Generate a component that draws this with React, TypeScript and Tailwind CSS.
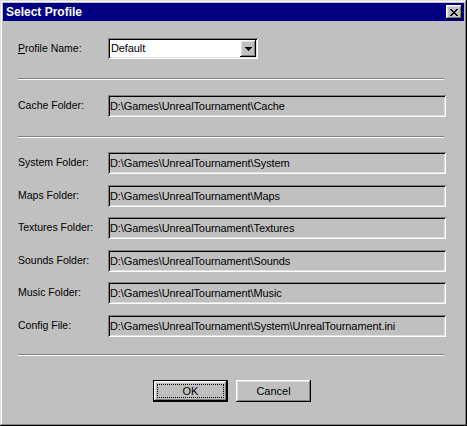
const raised =
  'shadow-[inset_-1px_-1px_#000,inset_1px_1px_#fff,inset_-2px_-2px_#808080,inset_2px_2px_#dfdfdf]';
const sunken =
  'shadow-[inset_1px_1px_#808080,inset_-1px_-1px_#fff,inset_2px_2px_#000,inset_-2px_-2px_#dfdfdf]';

const folders = [
  { label: 'System Folder:', path: 'D:\\Games\\UnrealTournament\\System', mt: 'mt-0' },
  { label: 'Maps Folder:', path: 'D:\\Games\\UnrealTournament\\Maps', mt: 'mt-[11px]' },
  { label: 'Textures Folder:', path: 'D:\\Games\\UnrealTournament\\Textures', mt: 'mt-[10px]' },
  { label: 'Sounds Folder:', path: 'D:\\Games\\UnrealTournament\\Sounds', mt: 'mt-[11px]' },
  { label: 'Music Folder:', path: 'D:\\Games\\UnrealTournament\\Music', mt: 'mt-[10px]' },
  { label: 'Config File:', path: 'D:\\Games\\UnrealTournament\\System\\UnrealTournament.ini', mt: 'mt-[11px]' },
];

function Separator({ className }: { className: string }) {
  return <div className={`w-[426px] h-[2px] border-t border-[#808080] border-b border-b-white ${className}`} />;
}

function FieldRow({ label, path, className = '' }: { label: string; path: string; className?: string }) {
  return (
    <div className={`flex items-center h-[22px] ${className}`}>
      <div className="w-[90px] text-[10.5px] text-black">{label}</div>
      <div className={`w-[338px] h-[22px] ${sunken} bg-[#c0c0c0] flex items-center pl-[2px] text-[11px] tracking-[-0.1px] text-black`}>
        {path}
      </div>
    </div>
  );
}

export default function App() {
  return (
    <div
      className={`w-[467px] h-[426px] bg-[#c0c0c0] p-[3px] flex flex-col font-['Liberation_Sans',Arial,sans-serif] shadow-[inset_-1px_-1px_#000,inset_1px_1px_#dfdfdf,inset_-2px_-2px_#808080,inset_2px_2px_#fff]`}
    >
      {/* title bar */}
      <div className="h-[18px] bg-[#000080] flex items-center justify-between pl-[3px] pr-[2px]">
        <span className="text-white font-bold text-[12px] leading-none">Select Profile</span>
        <div className={`w-[16px] h-[14px] bg-[#c0c0c0] ${raised} flex items-center justify-center`}>
          <svg width="8" height="7" viewBox="0 0 8 7" shapeRendering="crispEdges">
            <path
              d="M0 0h2v1h-2zM6 0h2v1h-2zM1 1h2v1h-2zM5 1h2v1h-2zM2 2h4v1h-4zM3 3h2v1h-2zM2 4h4v1h-4zM1 5h2v1h-2zM5 5h2v1h-2zM0 6h2v1h-2zM6 6h2v1h-2z"
              fill="#000"
            />
          </svg>
        </div>
      </div>

      <div className="flex flex-col px-[15px]">
        {/* profile combo */}
        <div className="flex items-center mt-[17px] h-[21px]">
          <div className="w-[90px] text-[10.5px] text-black">
            <span className="underline">P</span>rofile Name:
          </div>
          <div className={`w-[150px] h-[21px] bg-white ${sunken} flex items-center justify-between pl-[3px] pr-[2px]`}>
            <span className="text-[11px] tracking-[-0.1px] text-black">Default</span>
            <div className={`w-[16px] h-[17px] bg-[#c0c0c0] ${raised} flex items-center justify-center`}>
              <svg width="7" height="4" viewBox="0 0 7 4" shapeRendering="crispEdges">
                <path d="M0 0h7v1h-1v1h-1v1h-1v1h-1v-1h-1v-1h-1v-1h-1z" fill="#000" />
              </svg>
            </div>
          </div>
        </div>

        <Separator className="mt-[19px]" />

        <FieldRow label="Cache Folder:" path="D:\Games\UnrealTournament\Cache" className="mt-[15px]" />

        <Separator className="mt-[19px]" />

        <div className="flex flex-col mt-[14px]">
          {folders.map((f) => (
            <FieldRow key={f.label} label={f.label} path={f.path} className={f.mt} />
          ))}
        </div>

        <Separator className="mt-[17px]" />

        {/* buttons */}
        <div className="flex gap-[8px] mt-[24px] ml-[135px]">
          <div className="w-[75px] h-[22px] border border-black">
            <div className={`w-full h-full ${raised} bg-[#c0c0c0] p-[3px]`}>
              <div className="w-full h-full border border-dotted border-black flex items-center justify-center text-[11px] text-black">
                OK
              </div>
            </div>
          </div>
          <div className={`w-[75px] h-[22px] ${raised} bg-[#c0c0c0] flex items-center justify-center text-[11px] text-black`}>
            Cancel
          </div>
        </div>
      </div>
    </div>
  );
}
